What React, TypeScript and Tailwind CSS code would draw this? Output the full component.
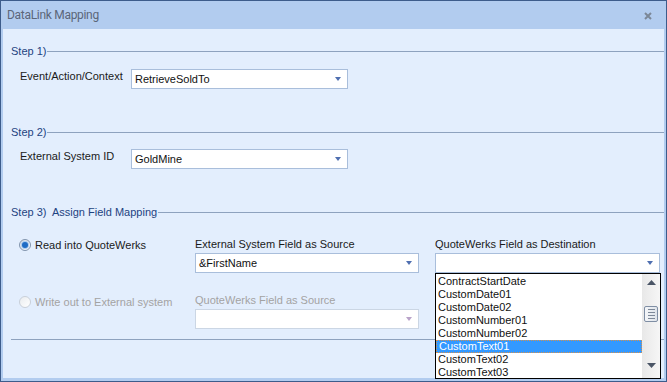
import React from "react";

const font = { fontFamily: '"Liberation Sans", Arial, sans-serif' };

function Arrow({ disabled }: { disabled?: boolean }) {
  return (
    <svg width="6" height="4" viewBox="0 0 6 4" className="shrink-0">
      <polygon points="0,0 6,0 3,4" fill={disabled ? "#b9a3c9" : "#4f6fb0"} />
    </svg>
  );
}

function Combo({ value, disabled, width }: { value?: string; disabled?: boolean; width: string }) {
  return (
    <div
      className={`${width} h-[20px] bg-white border ${
        disabled ? "border-[#cbd6e4]" : "border-[#a9bedb]"
      } flex items-center pl-[3px] pr-[6px]`}
    >
      <span className="flex-1 text-[11px] leading-[14px] text-[#111]">{value}</span>
      <Arrow disabled={disabled} />
    </div>
  );
}

function Heading({ children }: { children: React.ReactNode }) {
  return (
    <div className="flex items-center h-[14px]">
      <span className="text-[11px] leading-[14px] text-[#1d4381] whitespace-pre">{children}</span>
      <div className="flex-1 h-px bg-[#8ea2be] ml-[1px]" />
    </div>
  );
}

function Radio({ checked, disabled }: { checked?: boolean; disabled?: boolean }) {
  return (
    <div
      className={`w-[12px] h-[12px] rounded-full border flex items-center justify-center shrink-0 ${
        disabled
          ? "border-[#c9d0d9] bg-gradient-to-br from-[#e9ecef] to-white"
          : "border-[#8194ad] bg-gradient-to-br from-[#d7dde5] to-white"
      }`}
    >
      {checked && (
        <div className="w-[6px] h-[6px] rounded-full bg-[#1f6cc4] ring-1 ring-[#a9cbef]" />
      )}
    </div>
  );
}

const items = [
  "ContractStartDate",
  "CustomDate01",
  "CustomDate02",
  "CustomNumber01",
  "CustomNumber02",
  "CustomText01",
  "CustomText02",
  "CustomText03",
];

function ListPopup() {
  return (
    <div className="absolute left-0 top-[20px] w-[226px] h-[106px] bg-white border border-black flex overflow-hidden z-10">
      <div className="flex-1 pt-[1px]">
        {items.map((it) => (
          <div
            key={it}
            className={`h-[13px] flex items-center pl-[2px] text-[11px] leading-[13px] ${
              it === "CustomText01"
                ? "bg-[#3399ff] text-white border border-dotted border-[#d8914a] pl-[1px]"
                : "text-[#111]"
            }`}
          >
            {it}
          </div>
        ))}
      </div>
      <div className="w-[18px] bg-gradient-to-r from-[#e8e8e8] to-[#f6f6f6] flex flex-col items-center">
        <svg width="9" height="5" viewBox="0 0 9 5" className="mt-[6px]">
          <polygon points="0,5 9,5 4.5,0" fill="#4a5566" />
        </svg>
        <div className="mt-[21px] w-[14px] h-[16px] rounded-[2px] border border-[#7f8ea4] bg-gradient-to-r from-[#f4f6f9] to-[#dfe4ea] flex flex-col items-center justify-center gap-[2px]">
          <div className="w-[7px] h-px bg-[#7d8898]" />
          <div className="w-[7px] h-px bg-[#7d8898]" />
          <div className="w-[7px] h-px bg-[#7d8898]" />
          <div className="w-[7px] h-px bg-[#7d8898]" />
        </div>
        <svg width="9" height="5" viewBox="0 0 9 5" className="mt-auto mb-[10px]">
          <polygon points="0,0 9,0 4.5,5" fill="#4a5566" />
        </svg>
      </div>
    </div>
  );
}

export default function App() {
  return (
    <div style={font} className="w-[667px] h-[382px] border border-[#3d5c8b] bg-[#b2ccef] flex flex-col">
      <div className="h-[28px] flex items-center justify-between pl-[6px] pr-[14px]">
        <span
          className="text-[12px] text-[#5b6679] tracking-[-0.3px]"
          style={{ fontFamily: 'Roboto, "Liberation Sans", sans-serif' }}
        >
          DataLink Mapping
        </span>
        <svg width="8" height="8" viewBox="0 0 8 8" className="mt-[1px]">
          <path d="M1 1L7 7M7 1L1 7" stroke="#7b8797" strokeWidth="2" />
        </svg>
      </div>
      <div className="flex-1 mx-[2px] mb-[3px] bg-[#e3eefd] pl-[8px] pt-[15px] text-[11px] leading-[14px] text-[#1a1a1a]">
        <Heading>Step 1)</Heading>
        <div className="flex items-start mt-[11px] pl-[9px]">
          <span className="w-[111px]">Event/Action/Context</span>
          <Combo value="RetrieveSoldTo" width="w-[217px]" />
        </div>

        <div className="mt-[36px]">
          <Heading>Step 2)</Heading>
        </div>
        <div className="flex items-start mt-[10px] pl-[9px]">
          <span className="w-[111px]">External System ID</span>
          <Combo value="GoldMine" width="w-[217px]" />
        </div>

        <div className="mt-[36px]">
          <Heading>{"Step 3)  Assign Field Mapping"}</Heading>
        </div>

        <div className="mt-[18px] flex">
          <div className="w-[184px] pl-[8px]">
            <div className="flex items-center gap-[4px] h-[16px]">
              <Radio checked />
              <span>Read into QuoteWerks</span>
            </div>
            <div className="flex items-center gap-[4px] h-[16px] mt-[41px] text-[#a3a3a3]">
              <Radio disabled />
              <span>Write out to External system</span>
            </div>
          </div>
          <div className="w-[224px]">
            <div>External System Field as Source</div>
            <div className="mt-[2px]">
              <Combo value="&FirstName" width="w-[224px]" />
            </div>
            <div className="mt-[20px] text-[#a3a3a3]">QuoteWerks Field as Source</div>
            <div className="mt-[2px]">
              <Combo disabled width="w-[224px]" />
            </div>
          </div>
          <div className="ml-[16px] w-[225px]">
            <div>QuoteWerks Field as Destination</div>
            <div className="mt-[2px] relative">
              <Combo width="w-[225px]" />
              <ListPopup />
            </div>
          </div>
        </div>

        <div className="mt-[10px] h-px bg-[#8ea2be]" />
      </div>
    </div>
  );
}
